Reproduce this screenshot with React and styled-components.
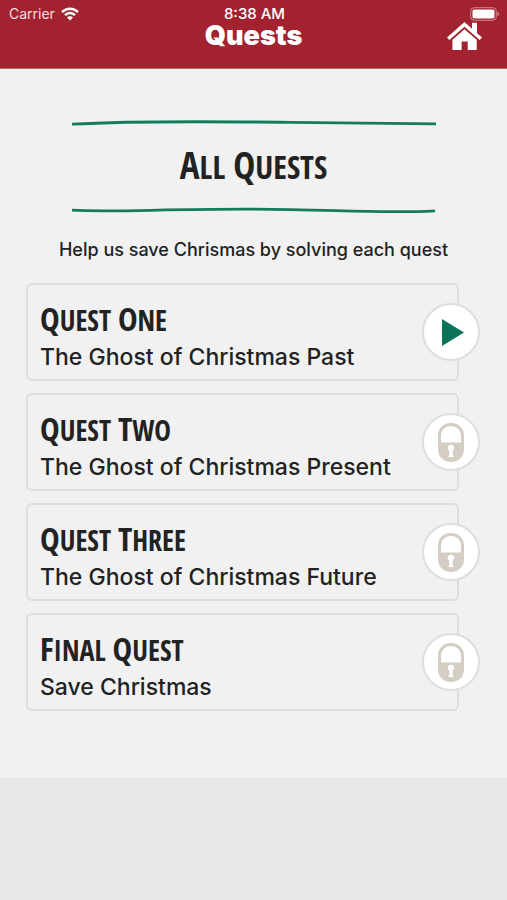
import React from 'react';
import styled, { createGlobalStyle } from 'styled-components';

const GlobalStyle = createGlobalStyle`
  * {
    box-sizing: border-box;
  }

  body {
    margin: 0;
    background: #e8e8e8;
    color: #222222;
    font-family: Inter, 'Liberation Sans', sans-serif;
  }
`;

const Header = styled.header`
  padding-bottom: 19px;
  background: #a3222f;
  color: #ffffff;
  border-bottom: 1px solid #b8646b;
`;

const StatusBar = styled.div`
  display: grid;
  grid-template-columns: 1fr auto 1fr;
  align-items: center;
  height: 23px;
  padding: 4px 7px 0 9px;
  font-size: 14px;
  line-height: 18px;
`;

const Carrier = styled.span`
  display: flex;
  align-items: center;
  gap: 6px;
  color: #f6dfe1;
`;

const Clock = styled.span`
  font-size: 15px;
  font-weight: 500;
`;

const StatusIcon = styled.svg`
  display: block;
  justify-self: end;
`;

const TitleBar = styled.div`
  display: grid;
  grid-template-columns: 1fr auto 1fr;
  grid-template-rows: 26px;
  align-items: center;
  padding: 0 25px;
`;

const PageTitle = styled.h1`
  grid-column: 2;
  margin: 0;
  font-size: 27px;
  font-weight: 900;
  line-height: 28px;
`;

const HomeLink = styled.a`
  justify-self: end;
  color: inherit;

  svg {
    display: block;
  }
`;

const Panel = styled.main`
  padding: 51px 0 67px;
  background: #f1f1f1;
`;

const Banner = styled.div`
  display: flex;
  flex-direction: column;
  align-items: center;
`;

const Rule = styled.svg`
  display: block;
  width: 72%;
  height: 7px;
`;

const DisplayText = styled.h2`
  margin: 0;
  font-family: 'Noto Sans ExtraCondensed', 'Open Sans Condensed', 'Roboto Condensed', sans-serif;
  font-size: ${props => props.$size}px;
  font-weight: 800;
  line-height: ${props => props.$line}px;
  text-transform: uppercase;
`;

const Word = styled.span`
  display: inline-block;

  &::first-letter {
    font-size: ${props => props.$cap}px;
    line-height: 0;
  }
`;

const Intro = styled.p`
  margin: 23px 0 20px;
  font-size: 18px;
  font-weight: 500;
  line-height: 26px;
  text-align: center;
`;

const QuestList = styled.ul`
  display: flex;
  flex-direction: column;
  gap: 12px;
  margin: 0;
  padding: 0 48px 0 26px;
  list-style: none;
`;

const QuestCard = styled.li`
  position: relative;
  display: flex;
  flex-direction: column;
  gap: 5px;
  padding: 15px 12px 10px;
  border: 2px solid #deddd9;
  border-radius: 6px;
`;

const QuestName = styled.p`
  margin: 0;
  font-size: 23px;
  font-weight: 500;
  line-height: 24px;
`;

const QuestButton = styled.button`
  position: absolute;
  top: 50%;
  right: -23px;
  display: flex;
  align-items: center;
  justify-content: center;
  width: 58px;
  height: 58px;
  margin-top: -29px;
  padding: 0;
  border: 2px solid #dfdedb;
  border-radius: 50%;
  background: #ffffff;
`;

const quests = [
  { title: 'Quest One', name: 'The Ghost of Christmas Past', open: true },
  { title: 'Quest Two', name: 'The Ghost of Christmas Present', open: false },
  { title: 'Quest Three', name: 'The Ghost of Christmas Future', open: false },
  { title: 'Final Quest', name: 'Save Christmas', open: false }
];

function WifiIcon() {
  return (
    <StatusIcon width="18" height="14" viewBox="0 0 18 14" fill="none" stroke="#fff" strokeWidth="2.4">
      <path d="M1 5.2C5.4 .6 12.6 .6 17 5.2" />
      <path d="M4 8.2C6.8 5.3 11.2 5.3 14 8.2" />
      <path d="M9 13.6L6 10.5C7.6 8.9 10.4 8.9 12 10.5Z" fill="#fff" stroke="none" />
    </StatusIcon>
  );
}

function BatteryIcon() {
  return (
    <StatusIcon width="30" height="14" viewBox="0 0 30 14">
      <rect x=".7" y=".7" width="25.6" height="12.6" rx="3.5" fill="none" stroke="#cf8990" />
      <rect x="2.5" y="2.5" width="22" height="9" rx="1.8" fill="#fff" />
      <path d="M27.5 4.8C29.7 5.7 29.7 8.3 27.5 9.2Z" fill="#cf8990" />
    </StatusIcon>
  );
}

function HomeIcon() {
  return (
    <svg width="35" height="28" viewBox="0 0 35 28" fill="#fff">
      <path d="M17.5 0L25 6.7V.8H30V11.2L35 15.6L32.7 18L17.5 4.8L2.3 18L0 15.6Z" />
      <path d="M17.5 7.2L29.7 17.8V28H20.7V19.5H14.6V28H5.4V17.8Z" />
    </svg>
  );
}

function PlayIcon() {
  return (
    <svg width="26" height="27" viewBox="0 0 26 27">
      <path d="M4 0L26 13.5L4 27Z" fill="#0a7358" />
    </svg>
  );
}

function LockIcon() {
  return (
    <svg width="26" height="39" viewBox="0 0 26 39">
      <path d="M1.5 20V13C1.5 -2.3 24.5 -2.3 24.5 13V20" fill="none" stroke="#d3cdc3" strokeWidth="3" />
      <path d="M0 19.5H26V26C26 43.3 0 43.3 0 26Z" fill="#d3cdc3" />
      <path d="M13 21.7A3 3 0 0 0 11.2 27.3L11.4 31L10.3 34H15.7L14.6 31L14.8 27.3A3 3 0 0 0 13 21.7Z" fill="#fff" />
    </svg>
  );
}

function DisplayTitle({ as, text, size, cap, line }) {
  return (
    <DisplayText as={as} $size={size} $line={line}>
      {text.split(' ').map((word, index) => (
        <React.Fragment key={word}>
          {index > 0 && ' '}
          <Word $cap={cap}>{word}</Word>
        </React.Fragment>
      ))}
    </DisplayText>
  );
}

function App() {
  return (
    <>
      <GlobalStyle />
      <Header>
        <StatusBar>
          <Carrier>
            Carrier
            <WifiIcon />
          </Carrier>
          <Clock>8:38 AM</Clock>
          <BatteryIcon />
        </StatusBar>
        <TitleBar>
          <PageTitle>Quests</PageTitle>
          <HomeLink href="#home" aria-label="Home">
            <HomeIcon />
          </HomeLink>
        </TitleBar>
      </Header>

      <Panel>
        <Banner>
          <Rule viewBox="0 0 365 7" preserveAspectRatio="none" fill="none" stroke="#147b5f" strokeWidth="2.8">
            <path d="M1 4.2C70 .4 150 1.6 220 2.4C280 3 330 3.8 365 3.8" />
          </Rule>
          <DisplayTitle as="h2" text="All Quests" size={32} cap={37} line={80} />
          <Rule viewBox="0 0 365 7" preserveAspectRatio="none" fill="none" stroke="#147b5f" strokeWidth="2.8">
            <path d="M1 3.2C40 5.4 90 2 180 2.2C260 2.3 310 6.8 364 3.8" />
          </Rule>
        </Banner>
        <Intro>Help us save Chrismas by solving each quest</Intro>

        <QuestList>
          {quests.map(quest => (
            <QuestCard key={quest.title}>
              <DisplayTitle as="h3" text={quest.title} size={28} cap={33} line={40} />
              <QuestName>{quest.name}</QuestName>
              <QuestButton
                type="button"
                disabled={!quest.open}
                aria-label={quest.open ? `Play ${quest.title}` : `${quest.title} is locked`}
              >
                {quest.open ? <PlayIcon /> : <LockIcon />}
              </QuestButton>
            </QuestCard>
          ))}
        </QuestList>
      </Panel>
    </>
  );
}

export default App;
